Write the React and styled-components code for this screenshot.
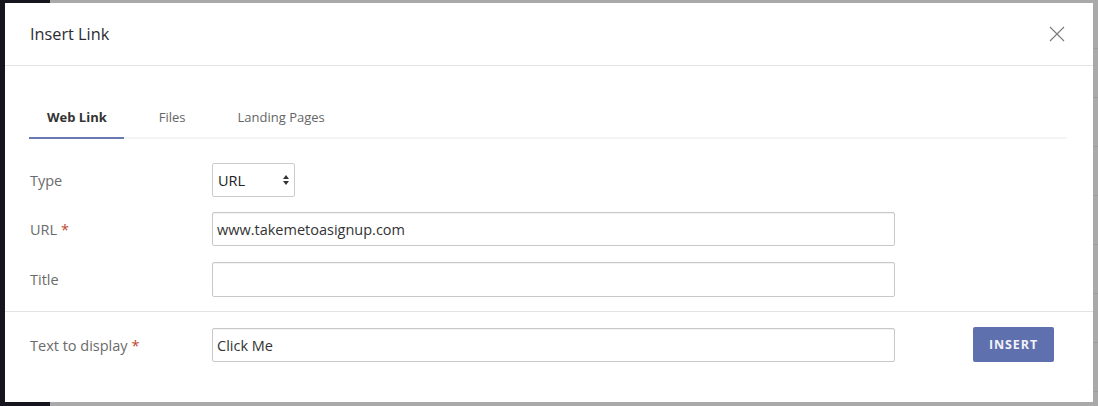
import React from 'react';
import styled, { createGlobalStyle } from 'styled-components';

const GlobalStyle = createGlobalStyle`
    body {
        margin: 0;
        font-family: "Open Sans", "Noto Sans", sans-serif;
    }
`;

const Backdrop = styled.div`
    width: 1098px;
    height: 406px;
    box-sizing: border-box;
    padding: 3px 5px 4px 5px;
    background:
        linear-gradient(to right, #16151e 0, #16151e 50px, transparent 50px),
        repeating-linear-gradient(to bottom, #a9a9a9 0, #a9a9a9 48px, #9c9c9c 48px, #9c9c9c 49px);
    background-color: #aaa;
`;

const Dialog = styled.div`
    width: 1088px;
    height: 399px;
    background: #fff;
    display: flex;
    flex-direction: column;
`;

const Header = styled.div`
    height: 62px;
    display: flex;
    align-items: center;
    justify-content: space-between;
    padding: 0 28px 0 25px;
    border-bottom: 1px solid #e3e3e3;
`;

const Title = styled.h2`
    margin: 0;
    font-size: 16.3px;
    font-weight: 400;
    color: #2b2b33;
`;

const CloseButton = styled.button`
    border: none;
    background: none;
    padding: 0;
    width: 16px;
    height: 16px;
    cursor: pointer;
    display: flex;
`;

const Tabs = styled.div`
    display: flex;
    gap: 17px;
    margin: 42px 26px 0 24px;
    border-bottom: 2px solid #f4f4f4;
`;

const Tab = styled.div`
    padding: 0 17px 11px 18px;
    margin-bottom: -2px;
    font-size: 13px;
    font-weight: ${props => (props.active ? 700 : 400)};
    color: ${props => (props.active ? '#333' : '#666')};
    border-bottom: 2px solid ${props => (props.active ? '#6a78b4' : 'transparent')};
`;

const Form = styled.div`
    display: flex;
    flex-direction: column;
    gap: 15px;
    padding: 24px 25px 14px 25px;
`;

const Row = styled.div`
    display: flex;
    align-items: center;
`;

const Label = styled.label`
    width: 182px;
    font-size: 14.5px;
    color: #6b6b6b;
`;

const Required = styled.span`
    color: #c0452e;
    margin-left: 4px;
`;

const Select = styled.div`
    width: 83px;
    height: 34px;
    box-sizing: border-box;
    border: 1px solid #ccc;
    border-radius: 2px;
    display: flex;
    align-items: center;
    justify-content: space-between;
    padding: 0 4px 0 5px;
    font-size: 14.5px;
    color: #222;
    background: #fff;
`;

const Input = styled.input`
    width: 683px;
    height: ${props => (props.tall ? 35 : 34)}px;
    margin-top: ${props => (props.tall ? 1 : 0)}px;
    box-sizing: border-box;
    border: 1px solid #c8c8c8;
    border-radius: 2px;
    box-shadow: inset 0 1px 1px rgba(0, 0, 0, 0.06);
    padding: 0 4px;
    font-family: inherit;
    font-size: 14.5px;
    color: #333;
    outline: none;
`;

const Footer = styled.div`
    border-top: 1px solid #e3e3e3;
    display: flex;
    align-items: center;
    padding: 16px 39px 0 25px;
`;

const InsertButton = styled.button`
    margin-left: auto;
    width: 81px;
    height: 35px;
    margin-top: -1px;
    border: none;
    border-radius: 2px;
    background: #5f70ae;
    color: #f2f3f8;
    font-family: inherit;
    font-size: 12.5px;
    font-weight: 700;
    letter-spacing: 0.9px;
    cursor: pointer;
`;

const SelectArrows = () => (
    <svg width="8" height="12" viewBox="0 0 8 12">
        <path d="M4 1 L7 5 L1 5 Z M4 11 L7 7 L1 7 Z" fill="#333" />
    </svg>
);

const App = () => {
    return (
        <>
            <GlobalStyle />
            <Backdrop>
                <Dialog>
                    <Header>
                        <Title>Insert Link</Title>
                        <CloseButton aria-label="Close">
                            <svg width="16" height="16" viewBox="0 0 16 16">
                                <path d="M1 1 L15 15 M15 1 L1 15" stroke="#7a7a7a" strokeWidth="1.1" />
                            </svg>
                        </CloseButton>
                    </Header>
                    <Tabs>
                        <Tab active>Web Link</Tab>
                        <Tab>Files</Tab>
                        <Tab>Landing Pages</Tab>
                    </Tabs>
                    <Form>
                        <Row>
                            <Label>Type</Label>
                            <Select>
                                URL
                                <SelectArrows />
                            </Select>
                        </Row>
                        <Row>
                            <Label>URL<Required>*</Required></Label>
                            <Input defaultValue="www.takemetoasignup.com" />
                        </Row>
                        <Row>
                            <Label>Title</Label>
                            <Input tall />
                        </Row>
                    </Form>
                    <Footer>
                        <Label>Text to display<Required>*</Required></Label>
                        <Input defaultValue="Click Me" />
                        <InsertButton>INSERT</InsertButton>
                    </Footer>
                </Dialog>
            </Backdrop>
        </>
    );
};

export default App;
